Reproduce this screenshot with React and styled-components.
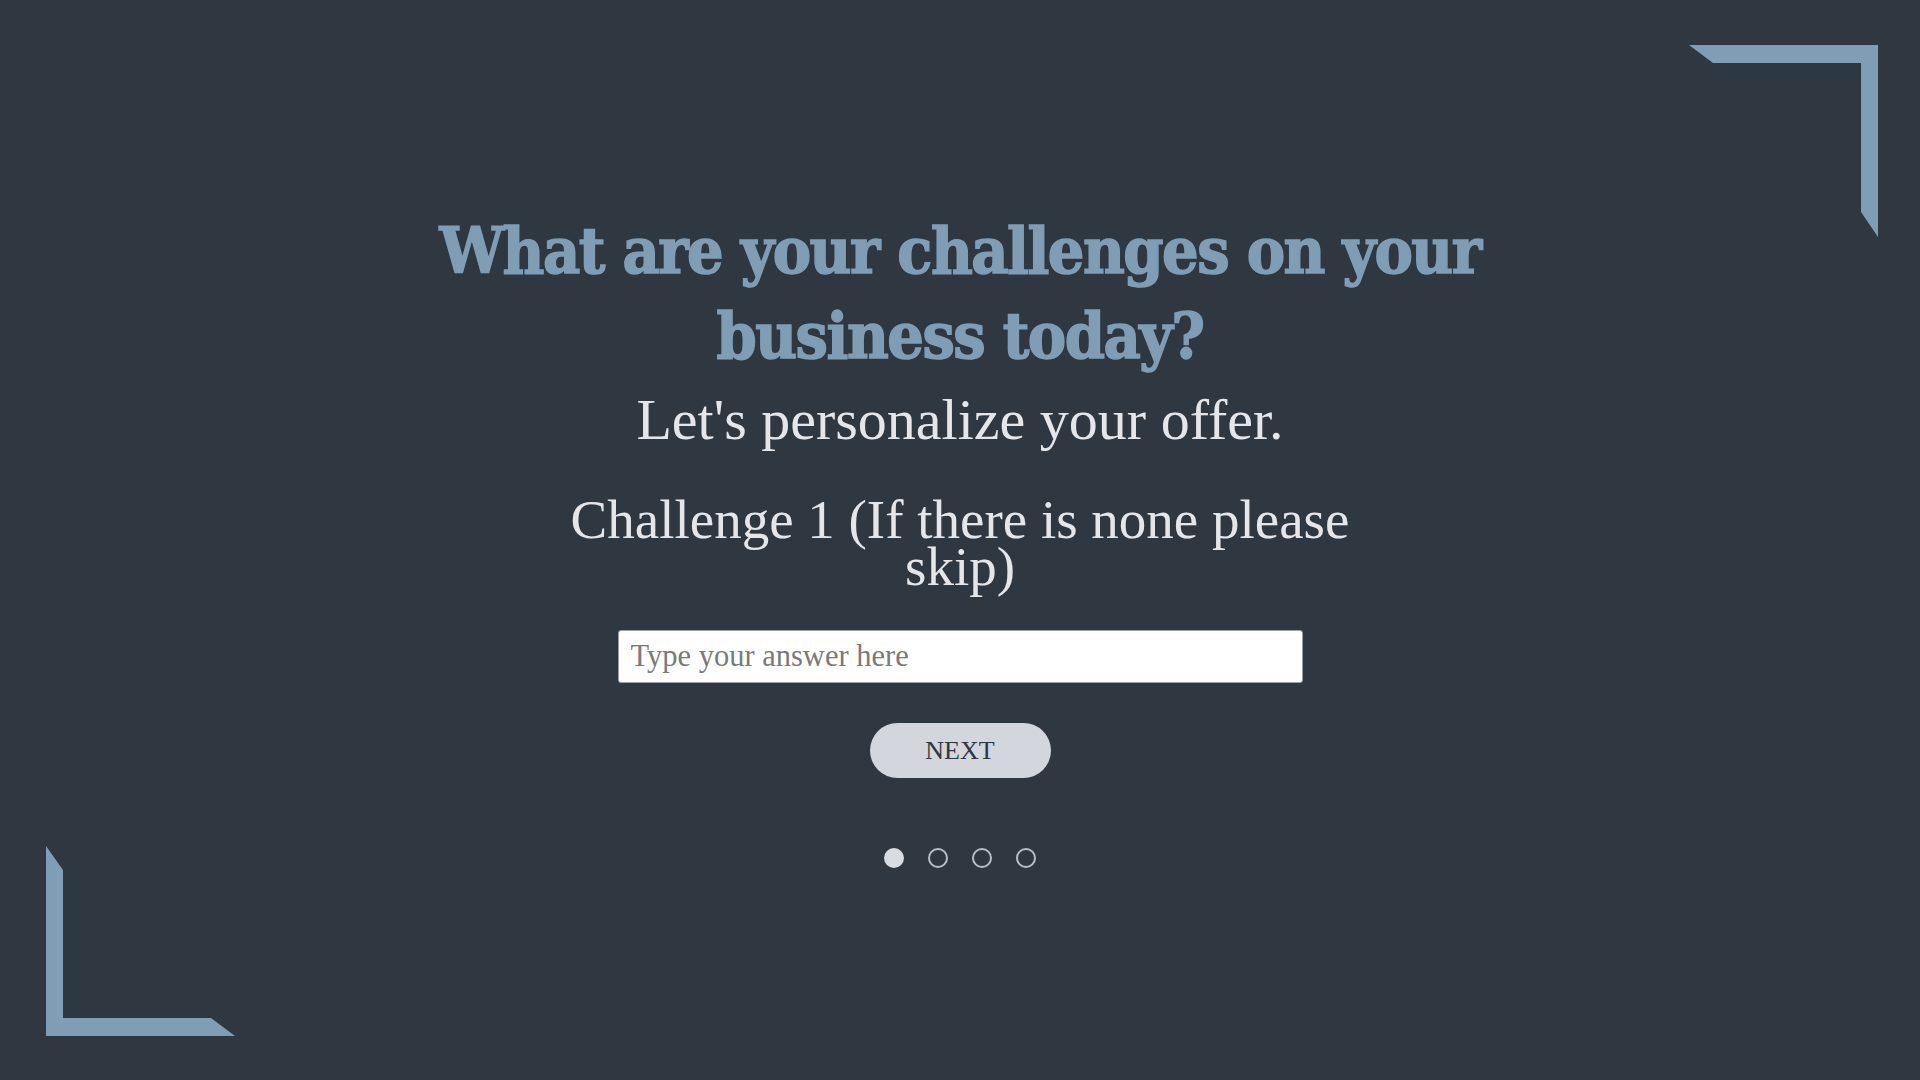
import React from 'react';
import styled, { createGlobalStyle } from 'styled-components';

const GlobalStyle = createGlobalStyle`
  html, body {
    margin: 0;
    padding: 0;
    background: #2f3740;
  }
  * {
    box-sizing: border-box;
  }
`;

const ACCENT = '#7f9db5';

const CornerTopRight = () => (
  <svg width="189" height="192" viewBox="0 0 189 192">
    <polygon points="0,0 189,0 189,192 172,167 172,18 24,18" fill={ACCENT} />
  </svg>
);

const CornerBottomLeft = () => (
  <svg width="189" height="190" viewBox="0 0 189 190">
    <polygon points="0,0 17,24 17,172 165,172 189,190 0,190" fill={ACCENT} />
  </svg>
);

const App = () => {
  const steps = [0, 1, 2, 3];
  const current = 0;

  return (
    <>
      <GlobalStyle />
      <Page>
        <Corner $pos="top-right">
          <CornerTopRight />
        </Corner>
        <Corner $pos="bottom-left">
          <CornerBottomLeft />
        </Corner>

        <Content>
          <Title>What are your challenges on your business today?</Title>
          <Subtitle>Let's personalize your offer.</Subtitle>
          <Question>Challenge 1 (If there is none please skip)</Question>
          <AnswerInput type="text" placeholder="Type your answer here" />
          <NextButton type="button">NEXT</NextButton>
          <Dots>
            {steps.map((s) => (
              <Dot key={s} $active={s === current} />
            ))}
          </Dots>
        </Content>
      </Page>
    </>
  );
};

export default App;

const Page = styled.div`
  position: relative;
  width: 100%;
  height: 1080px;
  overflow: hidden;
  background: #2f3740;
`;

const Corner = styled.div`
  position: absolute;
  line-height: 0;
  ${({ $pos }) =>
    $pos === 'top-right'
      ? 'top: 45px; right: 42px;'
      : 'bottom: 44px; left: 46px;'}
`;

const Content = styled.div`
  display: flex;
  flex-direction: column;
  align-items: center;
  padding-top: 208px;
  text-align: center;
`;

const Title = styled.h1`
  margin: 0;
  max-width: 1080px;
  font-family: 'DejaVu Serif Condensed', 'DejaVu Serif', serif;
  font-stretch: condensed;
  font-weight: 700;
  font-size: 64px;
  line-height: 85px;
  letter-spacing: -1.5px;
  color: ${ACCENT};
  -webkit-text-stroke: 1.5px ${ACCENT};
`;

const Subtitle = styled.p`
  margin: 10px 0 0;
  font-family: 'Liberation Serif', serif;
  font-size: 58px;
  line-height: 64px;
  color: #e4e6ea;
`;

const Question = styled.h2`
  margin: 44px 0 0;
  max-width: 820px;
  font-family: 'Liberation Serif', serif;
  font-weight: 400;
  font-size: 55px;
  line-height: 47px;
  color: #e4e6ea;
`;

const AnswerInput = styled.input`
  margin-top: 40px;
  width: 685px;
  height: 53px;
  padding: 0 12px;
  border: 1px solid #9aa0a8;
  border-radius: 3px;
  background: #ffffff;
  font-family: 'Liberation Serif', serif;
  font-size: 30.5px;
  color: #333;
  outline: none;

  &::placeholder {
    color: #7a7a7a;
  }
`;

const NextButton = styled.button`
  margin-top: 40px;
  width: 181px;
  height: 55px;
  border: none;
  border-radius: 28px;
  background: #d3d6dc;
  font-family: 'Liberation Serif', serif;
  font-size: 26px;
  color: #2f3740;
  cursor: pointer;
`;

const Dots = styled.div`
  display: flex;
  gap: 24px;
  margin-top: 70px;
`;

const Dot = styled.span`
  width: 20px;
  height: 20px;
  border-radius: 50%;
  background: ${({ $active }) => ($active ? '#d9dce1' : 'transparent')};
  border: 2px solid ${({ $active }) => ($active ? '#d9dce1' : '#b9bec6')};
`;
